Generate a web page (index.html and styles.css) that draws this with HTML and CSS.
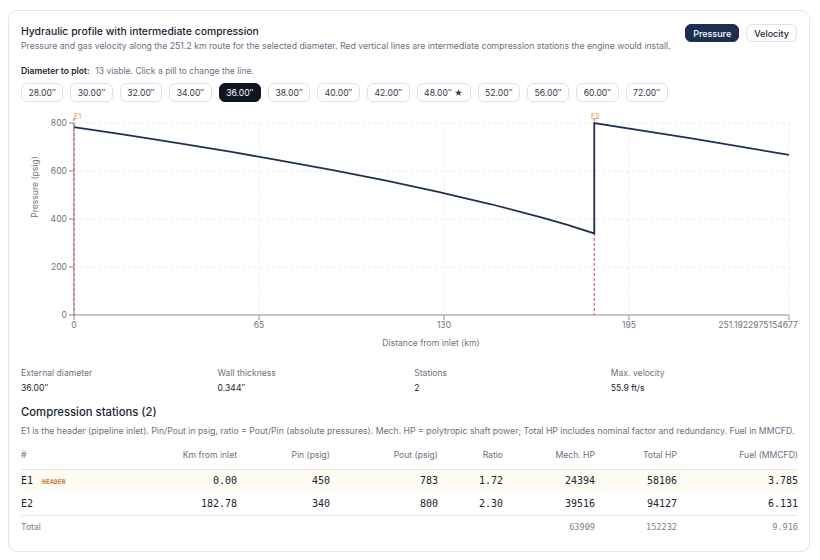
FILE: index.html
```html
<!DOCTYPE html>
<html lang="en">
<head>
    <meta charset="UTF-8">
    <meta name="viewport" content="width=device-width, initial-scale=1.0">
    <title>Hydraulic profile</title>
    <link rel="stylesheet" href="styles.css">
</head>
<body>

    <!-- Hydraulic profile card -->
    <div class="card">
        <div class="head">
            <div>
                <h2 class="title">Hydraulic profile with intermediate compression</h2>
                <p class="sub">Pressure and gas velocity along the 251.2 km route for the selected diameter. Red vertical lines are intermediate compression stations the engine would install.</p>
            </div>
            <div class="toggle">
                <button class="tg active">Pressure</button>
                <button class="tg">Velocity</button>
            </div>
        </div>

        <div class="picker">
            <span class="picker-label">Diameter to plot:</span>
            <span class="picker-hint">13 viable. Click a pill to change the line.</span>
        </div>
        <div class="pills">
            <button class="pill">28.00″</button>
            <button class="pill">30.00″</button>
            <button class="pill">32.00″</button>
            <button class="pill">34.00″</button>
            <button class="pill active">36.00″</button>
            <button class="pill">38.00″</button>
            <button class="pill">40.00″</button>
            <button class="pill">42.00″</button>
            <button class="pill">48.00″ ★</button>
            <button class="pill">52.00″</button>
            <button class="pill">56.00″</button>
            <button class="pill">60.00″</button>
            <button class="pill">72.00″</button>
        </div>

        <!-- Chart -->
        <svg class="chart" width="780" height="248" viewBox="0 0 780 248">
            <g class="grid">
                <line x1="53" y1="17" x2="768" y2="17"/>
                <line x1="53" y1="65" x2="768" y2="65"/>
                <line x1="53" y1="113" x2="768" y2="113"/>
                <line x1="53" y1="161" x2="768" y2="161"/>
                <line x1="238" y1="17" x2="238" y2="209"/>
                <line x1="423" y1="17" x2="423" y2="209"/>
                <line x1="608" y1="17" x2="608" y2="209"/>
                <line x1="768" y1="17" x2="768" y2="209"/>
            </g>
            <g class="axis">
                <line x1="53" y1="17" x2="53" y2="209"/>
                <line x1="53" y1="209" x2="768" y2="209"/>
                <line x1="48" y1="17" x2="53" y2="17"/>
                <line x1="48" y1="65" x2="53" y2="65"/>
                <line x1="48" y1="113" x2="53" y2="113"/>
                <line x1="48" y1="161" x2="53" y2="161"/>
                <line x1="48" y1="209" x2="53" y2="209"/>
                <line x1="53" y1="209" x2="53" y2="214"/>
                <line x1="238" y1="209" x2="238" y2="214"/>
                <line x1="423" y1="209" x2="423" y2="214"/>
                <line x1="608" y1="209" x2="608" y2="214"/>
                <line x1="768" y1="209" x2="768" y2="214"/>
            </g>
            <g class="ticks">
                <text x="46" y="20" text-anchor="end">800</text>
                <text x="46" y="68" text-anchor="end">600</text>
                <text x="46" y="116" text-anchor="end">400</text>
                <text x="46" y="164" text-anchor="end">200</text>
                <text x="46" y="212" text-anchor="end">0</text>
                <text x="53" y="222" text-anchor="middle">0</text>
                <text x="238" y="222" text-anchor="middle">65</text>
                <text x="423" y="222" text-anchor="middle">130</text>
                <text x="608" y="222" text-anchor="middle">195</text>
                <text x="777" y="222" text-anchor="end">251.1922975154677</text>
            </g>
            <text class="axis-title" transform="translate(17 81) rotate(-90)" text-anchor="middle">Pressure (psig)</text>
            <text class="axis-title" x="410" y="240" text-anchor="middle">Distance from inlet (km)</text>

            <g class="station">
                <line x1="53" y1="12" x2="53" y2="209"/>
                <line x1="573.3" y1="12" x2="573.3" y2="209"/>
            </g>
            <text class="station-tag" x="53" y="13">E1</text>
            <text class="station-tag" x="570" y="13">E2</text>

            <polyline class="line" points="53,21.1 105,28.9 157,37.1 209.1,45.7 261.1,54.8 313.1,64.4 365.2,74.7 417.2,85.8 469.2,98 521.2,111.6 547.3,119.2 573.3,127.4 573.3,17 670.6,32.4 768,48.9"/>
        </svg>

        <!-- Summary -->
        <div class="stats">
            <div>
                <div class="stat-label">External diameter</div>
                <div class="stat-value">36.00″</div>
            </div>
            <div>
                <div class="stat-label">Wall thickness</div>
                <div class="stat-value">0.344″</div>
            </div>
            <div>
                <div class="stat-label">Stations</div>
                <div class="stat-value">2</div>
            </div>
            <div>
                <div class="stat-label">Max. velocity</div>
                <div class="stat-value">55.9 ft/s</div>
            </div>
        </div>

        <h3 class="section">Compression stations (2)</h3>
        <p class="note">E1 is the header (pipeline inlet). Pin/Pout in psig, ratio = Pout/Pin (absolute pressures). Mech. HP = polytropic shaft power; Total HP includes nominal factor and redundancy. Fuel in MMCFD.</p>

        <table class="stations">
            <colgroup>
                <col style="width: 110px">
                <col style="width: 106px">
                <col style="width: 93px">
                <col style="width: 108px">
                <col style="width: 65px">
                <col style="width: 92px">
                <col style="width: 82px">
                <col style="width: 121px">
            </colgroup>
            <thead>
                <tr>
                    <th>#</th>
                    <th>Km from inlet</th>
                    <th>Pin (psig)</th>
                    <th>Pout (psig)</th>
                    <th>Ratio</th>
                    <th>Mech. HP</th>
                    <th>Total HP</th>
                    <th>Fuel (MMCFD)</th>
                </tr>
            </thead>
            <tbody>
                <tr class="header-row">
                    <td>E1 <span class="tag">HEADER</span></td>
                    <td>0.00</td>
                    <td>450</td>
                    <td>783</td>
                    <td>1.72</td>
                    <td>24394</td>
                    <td>58106</td>
                    <td>3.785</td>
                </tr>
                <tr>
                    <td>E2</td>
                    <td>182.78</td>
                    <td>340</td>
                    <td>800</td>
                    <td>2.30</td>
                    <td>39516</td>
                    <td>94127</td>
                    <td>6.131</td>
                </tr>
            </tbody>
            <tfoot>
                <tr>
                    <td>Total</td>
                    <td></td>
                    <td></td>
                    <td></td>
                    <td></td>
                    <td>63909</td>
                    <td>152232</td>
                    <td>9.916</td>
                </tr>
            </tfoot>
        </table>
    </div>

</body>
</html>
```

FILE: styles.css
```css
* {
    margin: 0;
    padding: 0;
    box-sizing: border-box;
    font-family: Inter, "Noto Sans", sans-serif;
}
body {
    background: #fff;
    margin: 10px 10px 0 8px;
}

/* Card */
.card {
    width: 802px;
    height: 542px;
    border: 1px solid #e2e5ea;
    border-radius: 9px;
    padding: 13px 12px 0 12px;
    color: #1c2333;
}
.head {
    display: flex;
    justify-content: space-between;
    align-items: flex-start;
}
.title {
    font-size: 10.4px;
    font-weight: 500;
    line-height: 16px;
    color: #1c2333;
}
.sub {
    font-size: 8.7px;
    line-height: 13px;
    color: #6b7180;
}
.toggle {
    display: flex;
    gap: 7px;
}
.tg {
    height: 18px;
    padding: 0 7px;
    border: 1px solid #dfe3e9;
    border-radius: 6px;
    background: #fff;
    font-size: 9px;
    font-weight: 500;
    color: #1c2333;
}
.tg.active {
    background: #1b2f52;
    border-color: #1b2f52;
    color: #fff;
}

/* Diameter picker */
.picker {
    margin-top: 12px;
    font-size: 8.6px;
    line-height: 12px;
}
.picker-label {
    font-weight: 600;
    color: #1c2333;
    margin-right: 3px;
}
.picker-hint {
    color: #6b7180;
}
.pills {
    display: flex;
    gap: 7px;
    margin-top: 6px;
}
.pill {
    height: 19px;
    padding: 0 6.5px;
    border: 1px solid #dde1e7;
    border-radius: 6px;
    background: #fff;
    font-size: 8.6px;
    color: #333a48;
}
.pill.active {
    background: #0f1522;
    border-color: #0f1522;
    color: #fff;
}

/* Chart */
.chart {
    display: block;
    margin-top: 4px;
}
.grid line {
    stroke: #ececef;
    stroke-width: 1;
    stroke-dasharray: 3 3;
}
.axis line {
    stroke: #8a8d93;
    stroke-width: 1;
}
.ticks text, .axis-title {
    font-size: 8.6px;
    fill: #6f7480;
}
.station line {
    stroke: #e0675f;
    stroke-width: 1.2;
    stroke-dasharray: 3 2;
}
.station-tag {
    font-size: 7px;
    fill: #e3874a;
}
.line {
    fill: none;
    stroke: #1e3152;
    stroke-width: 1.8;
}

/* Summary */
.stats {
    display: grid;
    grid-template-columns: repeat(4, 196.6px);
    margin-top: 13px;
}
.stat-label {
    font-size: 8.6px;
    line-height: 12px;
    color: #6b7180;
}
.stat-value {
    font-size: 8.6px;
    line-height: 14px;
    color: #1c2333;
    margin-top: 2px;
}

.section {
    font-size: 11.3px;
    font-weight: 500;
    line-height: 16px;
    margin-top: 9px;
}
.note {
    font-size: 8.7px;
    line-height: 12px;
    color: #6b7180;
    margin-top: 5px;
}

/* Stations table */
.stations {
    width: 100%;
    border-collapse: collapse;
    table-layout: fixed;
    margin-top: 5px;
}
.stations th {
    font-size: 8.6px;
    font-weight: 400;
    color: #6b7180;
    text-align: right;
    height: 27px;
    border-bottom: 1px solid #e2e5ea;
}
.stations td {
    font-family: "DejaVu Sans Mono", monospace;
    font-size: 10px;
    color: #1c2333;
    text-align: right;
    height: 23px;
}
.stations th:first-child, .stations td:first-child {
    text-align: left;
}
.header-row td {
    background: #fdfbf2;
}
.tag {
    font-family: "DejaVu Sans Mono", monospace;
    font-size: 6.5px;
    font-weight: 600;
    color: #d07a3a;
    margin-left: 3px;
}
.stations tfoot td {
    border-top: 1px solid #e2e5ea;
    font-size: 8.6px;
    color: #7a7f8a;
}
.stations tfoot td:first-child {
    font-family: Inter, sans-serif;
}
```
